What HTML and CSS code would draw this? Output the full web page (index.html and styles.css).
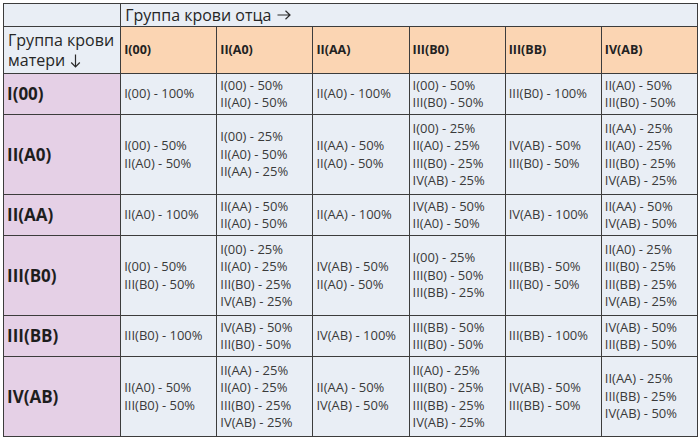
FILE: index.html
```html
<!DOCTYPE html>
<html lang="ru">
<head>
<meta charset="utf-8">
<title>Группа крови</title>
<link rel="stylesheet" href="styles.css">
</head>
<body>
<table class="grid">
  <colgroup>
    <col class="c-first"><col class="c"><col class="c"><col class="c"><col class="c"><col class="c"><col class="c">
  </colgroup>
  <tr class="r-title">
    <td class="blank"></td>
    <td class="title" colspan="6">Группа крови отца <svg class="arr-r" width="14" height="10" viewBox="0 0 14 10"><path d="M0.5 5H13M8.5 0.8L13 5L8.5 9.2" fill="none" stroke="#2a2a2a" stroke-width="1.2"/></svg></td>
  </tr>
  <tr class="r-head">
    <td class="mother">Группа крови<br>матери <svg class="arr-d" width="11" height="14" viewBox="0 0 11 14"><path d="M5.5 0.5V13M1.2 8.5L5.5 13L9.8 8.5" fill="none" stroke="#2a2a2a" stroke-width="1.2"/></svg></td>
    <td class="head">I(00)</td>
    <td class="head">II(A0)</td>
    <td class="head">II(AA)</td>
    <td class="head">III(B0)</td>
    <td class="head">III(BB)</td>
    <td class="head">IV(AB)</td>
  </tr>
  <tr class="r-short">
    <td class="side">I(00)</td>
    <td>I(00) - 100%</td>
    <td>I(00) - 50%<br>II(A0) - 50%</td>
    <td>II(A0) - 100%</td>
    <td>I(00) - 50%<br>III(B0) - 50%</td>
    <td>III(B0) - 100%</td>
    <td>II(A0) - 50%<br>III(B0) - 50%</td>
  </tr>
  <tr class="r-tall">
    <td class="side">II(A0)</td>
    <td>I(00) - 50%<br>II(A0) - 50%</td>
    <td>I(00) - 25%<br>II(A0) - 50%<br>II(AA) - 25%</td>
    <td>II(AA) - 50%<br>II(A0) - 50%</td>
    <td>I(00) - 25%<br>II(A0) - 25%<br>III(B0) - 25%<br>IV(AB) - 25%</td>
    <td>IV(AB) - 50%<br>III(B0) - 50%</td>
    <td>II(AA) - 25%<br>II(A0) - 25%<br>III(B0) - 25%<br>IV(AB) - 25%</td>
  </tr>
  <tr class="r-short">
    <td class="side">II(AA)</td>
    <td>II(A0) - 100%</td>
    <td>II(AA) - 50%<br>II(A0) - 50%</td>
    <td>II(AA) - 100%</td>
    <td>IV(AB) - 50%<br>II(A0) - 50%</td>
    <td>IV(AB) - 100%</td>
    <td>II(AA) - 50%<br>IV(AB) - 50%</td>
  </tr>
  <tr class="r-tall">
    <td class="side">III(B0)</td>
    <td>I(00) - 50%<br>III(B0) - 50%</td>
    <td>I(00) - 25%<br>II(A0) - 25%<br>III(B0) - 25%<br>IV(AB) - 25%</td>
    <td>IV(AB) - 50%<br>II(A0) - 50%</td>
    <td>I(00) - 25%<br>III(B0) - 50%<br>III(BB) - 25%</td>
    <td>III(BB) - 50%<br>III(B0) - 50%</td>
    <td>II(A0) - 25%<br>III(B0) - 25%<br>III(BB) - 25%<br>IV(AB) - 25%</td>
  </tr>
  <tr class="r-short">
    <td class="side">III(BB)</td>
    <td>III(B0) - 100%</td>
    <td>IV(AB) - 50%<br>III(B0) - 50%</td>
    <td>IV(AB) - 100%</td>
    <td>III(BB) - 50%<br>III(B0) - 50%</td>
    <td>III(BB) - 100%</td>
    <td>IV(AB) - 50%<br>III(BB) - 50%</td>
  </tr>
  <tr class="r-tall">
    <td class="side">IV(AB)</td>
    <td>II(A0) - 50%<br>III(B0) - 50%</td>
    <td>II(AA) - 25%<br>II(A0) - 25%<br>III(B0) - 25%<br>IV(AB) - 25%</td>
    <td>II(AA) - 50%<br>IV(AB) - 50%</td>
    <td>II(A0) - 25%<br>III(B0) - 25%<br>III(BB) - 25%<br>IV(AB) - 25%</td>
    <td>IV(AB) - 50%<br>III(BB) - 50%</td>
    <td>II(AA) - 25%<br>III(BB) - 25%<br>IV(AB) - 50%</td>
  </tr>
</table>
</body>
</html>
```
FILE: styles.css
```css
html, body {
  margin: 0;
  padding: 0;
  background: #ffffff;
}

body {
  padding: 3px 0 0 3px;
  font-family: "Open Sans", "Noto Sans", sans-serif;
  color: #3a3a3a;
}

.grid {
  border-collapse: collapse;
  table-layout: fixed;
  width: 695px;
}

.c-first { width: 117px; }
.c { width: 96px; }

.grid td {
  border: 1.5px solid #3c3c3c;
  background: #e9eef5;
  padding: 0 0 0 3px;
  vertical-align: middle;
  font-size: 13px;
  line-height: 17.5px;
  white-space: nowrap;
  overflow: hidden;
}

.r-title td { height: 22px; }
.r-head td { height: 46px; }
.r-short td { height: 40px; }
.r-tall td { height: 79px; }

.grid td.title {
  font-size: 16px;
  line-height: 20px;
  color: #262626;
  padding-left: 4px;
}

.grid td.mother {
  font-size: 16px;
  line-height: 20px;
  color: #262626;
  padding-left: 4px;
}

.arr-r {
  vertical-align: 1px;
  margin-left: 1px;
}

.arr-d {
  vertical-align: -2px;
  margin-left: 1px;
}

.grid td.head {
  background: #fbd5b3;
  font-weight: 700;
  font-size: 12.5px;
  color: #222;
  padding-left: 3px;
}

.grid td.side {
  background: #e5d0e6;
  font-weight: 700;
  font-size: 17px;
  color: #1e1e1e;
  padding-left: 3px;
}
```
